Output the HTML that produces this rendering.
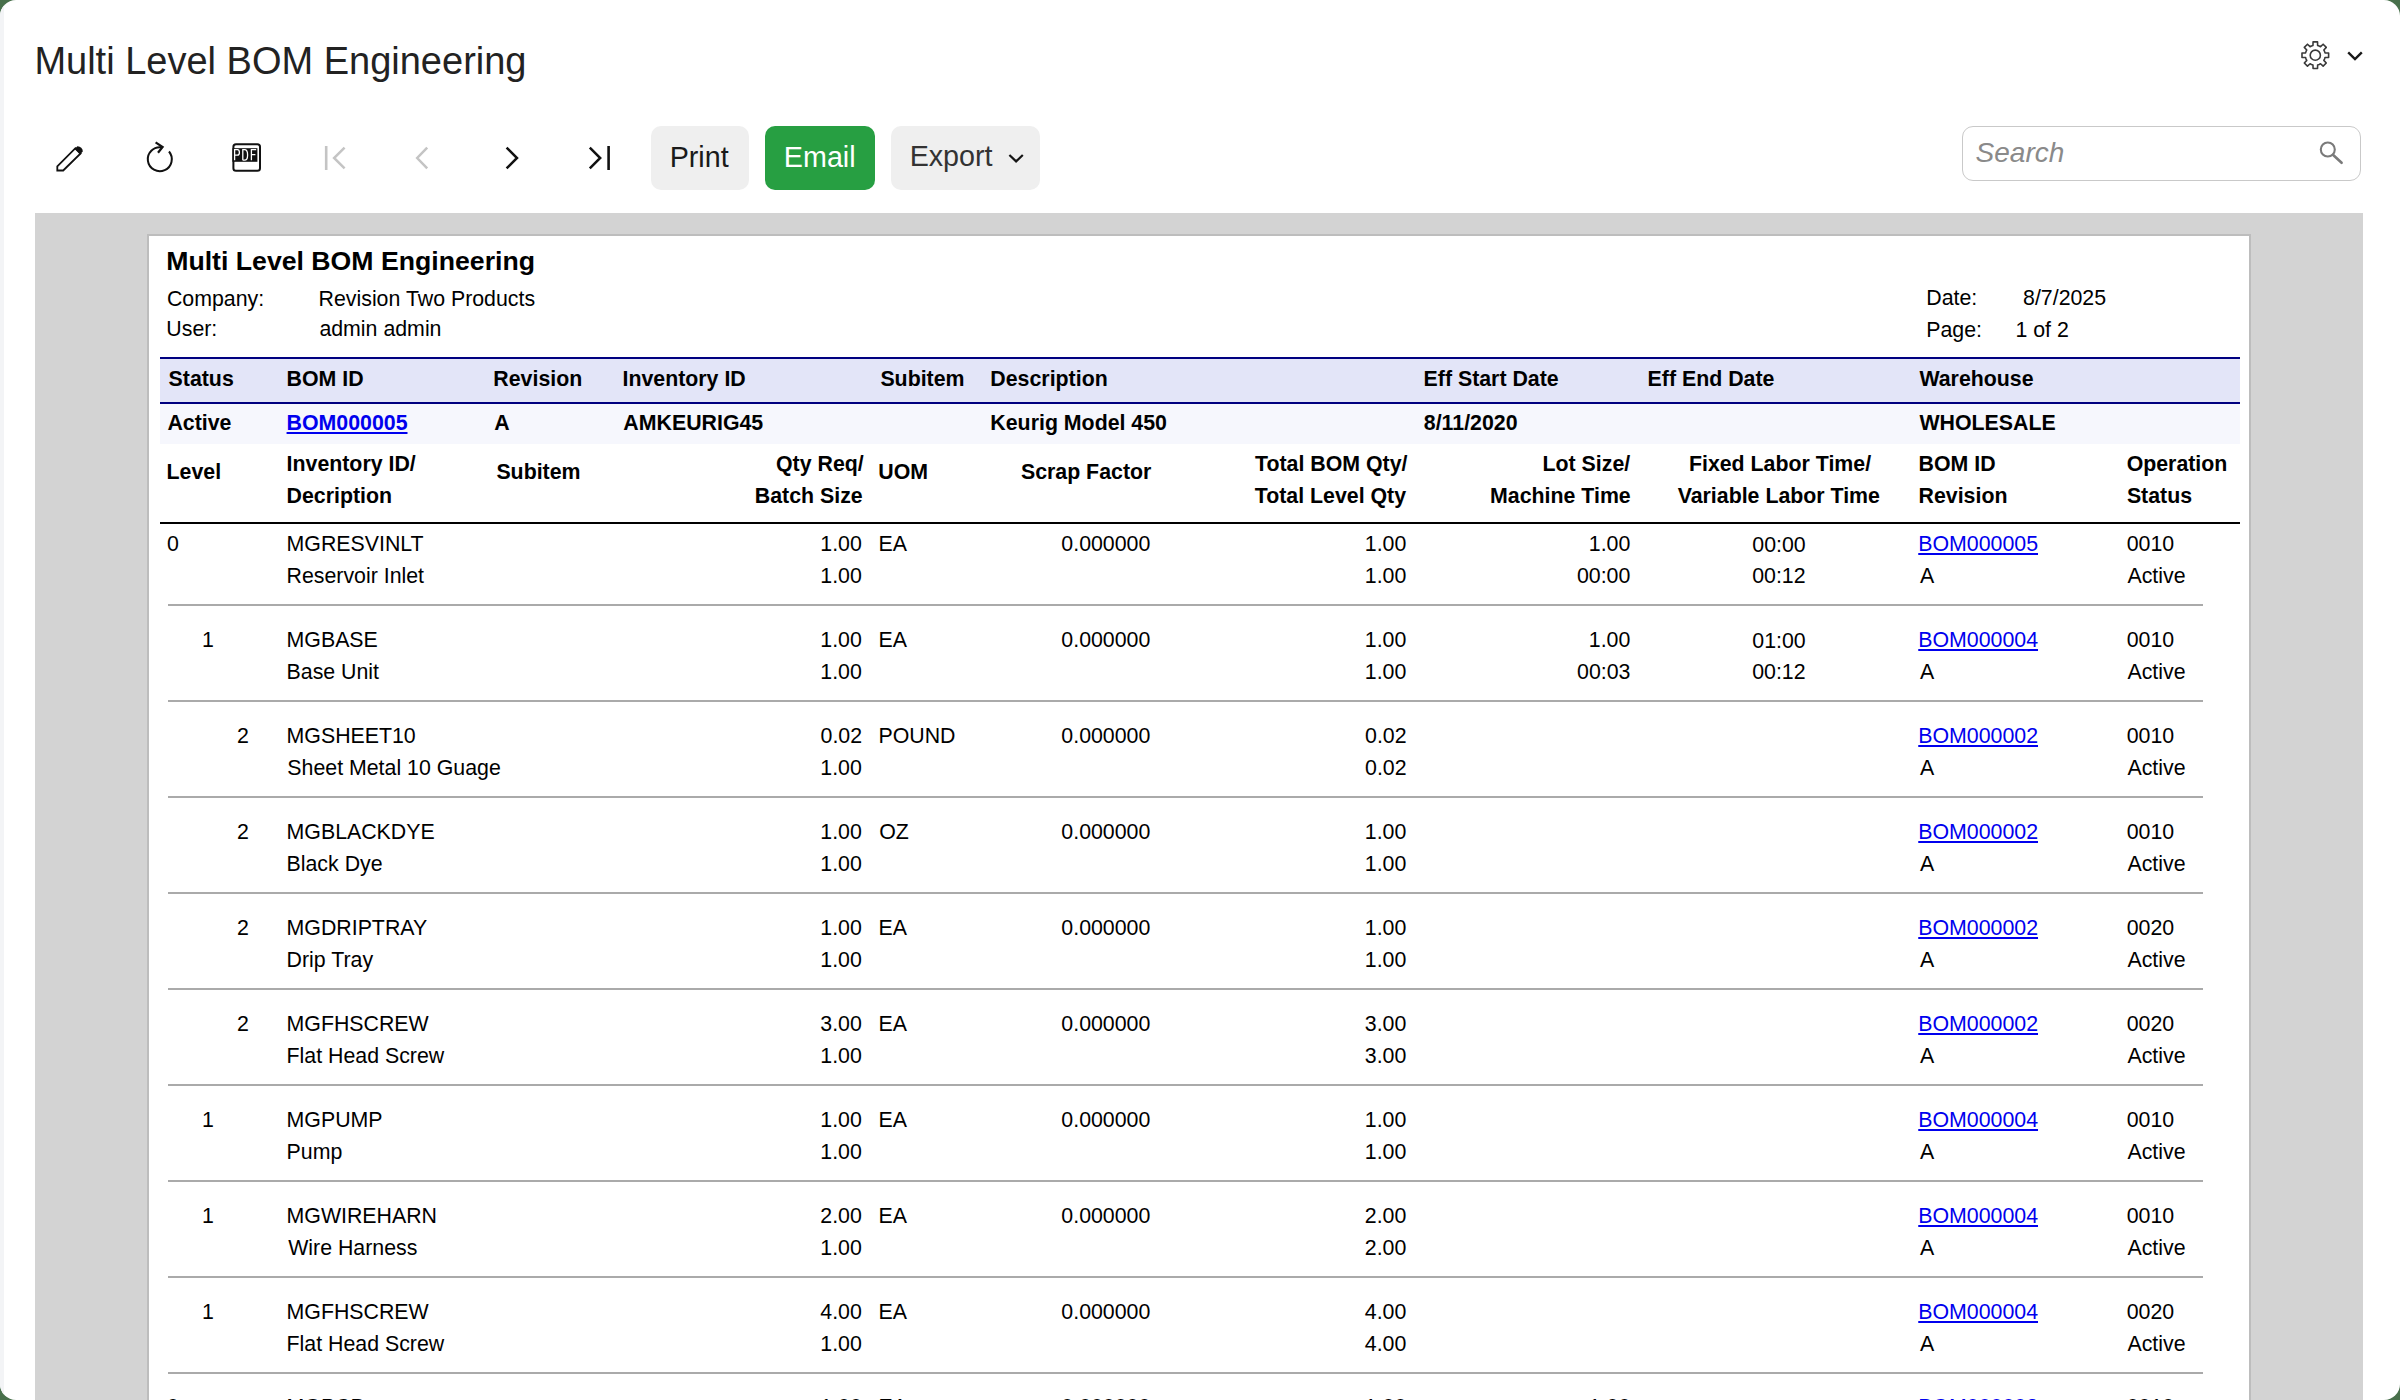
<!DOCTYPE html>
<html><head><meta charset="utf-8"><title>Multi Level BOM Engineering</title>
<style>
html,body{margin:0;padding:0;}
body{width:2400px;height:1400px;overflow:hidden;background:#48704b;position:relative;font-family:"Liberation Sans", sans-serif;}
#win{position:absolute;left:0;top:0;width:2400px;height:1400px;background:#fff;border-radius:16px;overflow:hidden;}
#strip{position:absolute;left:0;top:0;width:3.5px;height:1400px;background:#f3f4f6;}
.t{position:absolute;white-space:nowrap;font-family:"Liberation Sans", sans-serif;}
.r{position:absolute;}
</style></head>
<body><div id="win"><div id="strip"></div>
<div class="t" style="top:42.00px;font-size:38px;line-height:38px;color:#222;left:34.38px;">Multi Level BOM Engineering</div>
<div class="r" style="left:651px;top:125.5px;width:97.5px;height:64px;background:#efefef;border-radius:10px;"></div>
<div class="r" style="left:765px;top:125.5px;width:110px;height:64px;background:#279f42;border-radius:10px;"></div>
<div class="r" style="left:891px;top:125.5px;width:149px;height:64px;background:#efefef;border-radius:10px;"></div>
<div class="t" style="top:143.00px;font-size:28.7px;line-height:28.7px;color:#1a1a1a;left:669.65px;">Print</div>
<div class="t" style="top:143.00px;font-size:28.7px;line-height:28.7px;color:#fff;left:783.85px;">Email</div>
<div class="t" style="top:142.00px;font-size:28.7px;line-height:28.7px;color:#333;left:909.65px;">Export</div>
<div class="r" style="left:1962px;top:126px;width:399px;height:55px;background:#fff;border:1.5px solid #c9c9c9;border-radius:11px;box-sizing:border-box;"></div>
<div class="t" style="top:139.00px;font-size:28px;line-height:28px;font-style:italic;color:#8a8a8a;left:1975.61px;">Search</div>
<div class="r" style="left:35px;top:213px;width:2328px;height:1200px;background:#d3d3d3;"></div>
<div class="r" style="left:147px;top:234px;width:2104px;height:1200px;background:#fff;border:2px solid #bdbdbd;box-sizing:border-box;"></div>
<div class="t" style="top:247.80px;font-size:26.67px;line-height:26.67px;font-weight:bold;left:166.22px;">Multi Level BOM Engineering</div>
<div class="t" style="top:288.50px;font-size:21.33px;line-height:21.33px;left:166.92px;">Company:</div>
<div class="t" style="top:288.50px;font-size:21.33px;line-height:21.33px;left:318.55px;">Revision Two Products</div>
<div class="t" style="top:319.20px;font-size:21.33px;line-height:21.33px;left:166.35px;">User:</div>
<div class="t" style="top:319.20px;font-size:21.33px;line-height:21.33px;left:319.39px;">admin admin</div>
<div class="t" style="top:287.80px;font-size:21.33px;line-height:21.33px;left:1926.25px;">Date:</div>
<div class="t" style="top:287.80px;font-size:21.33px;line-height:21.33px;left:2023.07px;">8/7/2025</div>
<div class="t" style="top:319.50px;font-size:21.33px;line-height:21.33px;left:1926.25px;">Page:</div>
<div class="t" style="top:319.50px;font-size:21.33px;line-height:21.33px;left:2015.38px;">1 of 2</div>
<div class="r" style="left:160px;top:357.3px;width:2080px;height:46.7px;background:#e3e5f8;"></div>
<div class="r" style="left:160px;top:357.3px;width:2080px;height:2px;background:#000080;"></div>
<div class="r" style="left:160px;top:402px;width:2080px;height:2px;background:#000080;"></div>
<div class="r" style="left:160px;top:404px;width:2080px;height:39.5px;background:#f6f7fd;"></div>
<div class="t" style="top:368.80px;font-size:21.33px;line-height:21.33px;font-weight:bold;left:168.59px;">Status</div>
<div class="t" style="top:368.80px;font-size:21.33px;line-height:21.33px;font-weight:bold;left:286.57px;">BOM ID</div>
<div class="t" style="top:368.80px;font-size:21.33px;line-height:21.33px;font-weight:bold;left:493.37px;">Revision</div>
<div class="t" style="top:368.80px;font-size:21.33px;line-height:21.33px;font-weight:bold;left:622.47px;">Inventory ID</div>
<div class="t" style="top:368.80px;font-size:21.33px;line-height:21.33px;font-weight:bold;left:880.39px;">Subitem</div>
<div class="t" style="top:368.80px;font-size:21.33px;line-height:21.33px;font-weight:bold;left:990.37px;">Description</div>
<div class="t" style="top:368.80px;font-size:21.33px;line-height:21.33px;font-weight:bold;left:1423.57px;">Eff Start Date</div>
<div class="t" style="top:368.80px;font-size:21.33px;line-height:21.33px;font-weight:bold;left:1647.57px;">Eff End Date</div>
<div class="t" style="top:368.80px;font-size:21.33px;line-height:21.33px;font-weight:bold;left:1919.38px;">Warehouse</div>
<div class="t" style="top:413.40px;font-size:21.33px;line-height:21.33px;font-weight:bold;left:167.47px;">Active</div>
<div class="t" style="top:413.40px;font-size:21.33px;line-height:21.33px;font-weight:bold;color:#0000ee;left:286.57px;text-decoration:underline;">BOM000005</div>
<div class="t" style="top:413.40px;font-size:21.33px;line-height:21.33px;font-weight:bold;left:494.27px;">A</div>
<div class="t" style="top:413.40px;font-size:21.33px;line-height:21.33px;font-weight:bold;left:623.37px;">AMKEURIG45</div>
<div class="t" style="top:413.40px;font-size:21.33px;line-height:21.33px;font-weight:bold;left:990.37px;">Keurig Model 450</div>
<div class="t" style="top:413.40px;font-size:21.33px;line-height:21.33px;font-weight:bold;left:1423.82px;">8/11/2020</div>
<div class="t" style="top:413.40px;font-size:21.33px;line-height:21.33px;font-weight:bold;left:1919.38px;">WHOLESALE</div>
<div class="t" style="top:462.00px;font-size:21.33px;line-height:21.33px;font-weight:bold;left:166.57px;">Level</div>
<div class="t" style="top:454.00px;font-size:21.33px;line-height:21.33px;font-weight:bold;left:286.57px;">Inventory ID/</div>
<div class="t" style="top:485.80px;font-size:21.33px;line-height:21.33px;font-weight:bold;left:286.57px;">Decription</div>
<div class="t" style="top:462.00px;font-size:21.33px;line-height:21.33px;font-weight:bold;left:496.39px;">Subitem</div>
<div class="t" style="top:454.00px;font-size:21.33px;line-height:21.33px;font-weight:bold;left:736.00px;width:127.71px;text-align:right;">Qty Req/</div>
<div class="t" style="top:485.80px;font-size:21.33px;line-height:21.33px;font-weight:bold;left:714.86px;width:147.87px;text-align:right;">Batch Size</div>
<div class="t" style="top:462.00px;font-size:21.33px;line-height:21.33px;font-weight:bold;left:878.32px;">UOM</div>
<div class="t" style="top:462.00px;font-size:21.33px;line-height:21.33px;font-weight:bold;left:980.93px;width:170.40px;text-align:right;">Scrap Factor</div>
<div class="t" style="top:454.00px;font-size:21.33px;line-height:21.33px;font-weight:bold;left:1213.46px;width:194.05px;text-align:right;">Total BOM Qty/</div>
<div class="t" style="top:485.80px;font-size:21.33px;line-height:21.33px;font-weight:bold;left:1213.21px;width:192.90px;text-align:right;">Total Level Qty</div>
<div class="t" style="top:454.00px;font-size:21.33px;line-height:21.33px;font-weight:bold;left:1502.51px;width:127.69px;text-align:right;">Lot Size/</div>
<div class="t" style="top:485.80px;font-size:21.33px;line-height:21.33px;font-weight:bold;left:1449.68px;width:181.05px;text-align:right;">Machine Time</div>
<div class="t" style="top:454.00px;font-size:21.33px;line-height:21.33px;font-weight:bold;left:1668.75px;width:222.52px;text-align:center;">Fixed Labor Time/</div>
<div class="t" style="top:485.80px;font-size:21.33px;line-height:21.33px;font-weight:bold;left:1656.87px;width:243.88px;text-align:center;">Variable Labor Time</div>
<div class="t" style="top:454.00px;font-size:21.33px;line-height:21.33px;font-weight:bold;left:1918.57px;">BOM ID</div>
<div class="t" style="top:485.80px;font-size:21.33px;line-height:21.33px;font-weight:bold;left:1918.57px;">Revision</div>
<div class="t" style="top:454.00px;font-size:21.33px;line-height:21.33px;font-weight:bold;left:2126.63px;">Operation</div>
<div class="t" style="top:485.80px;font-size:21.33px;line-height:21.33px;font-weight:bold;left:2126.89px;">Status</div>
<div class="r" style="left:160px;top:522px;width:2080px;height:2px;background:#000;"></div>
<div class="t" style="top:533.70px;font-size:21.33px;line-height:21.33px;left:167.10px;">0</div>
<div class="t" style="top:533.70px;font-size:21.33px;line-height:21.33px;left:286.55px;">MGRESVINLT</div>
<div class="t" style="top:565.90px;font-size:21.33px;line-height:21.33px;left:286.55px;">Reservoir Inlet</div>
<div class="t" style="top:533.70px;font-size:21.33px;line-height:21.33px;left:780.32px;width:81.51px;text-align:right;">1.00</div>
<div class="t" style="top:565.90px;font-size:21.33px;line-height:21.33px;left:780.32px;width:81.51px;text-align:right;">1.00</div>
<div class="t" style="top:533.70px;font-size:21.33px;line-height:21.33px;left:878.45px;">EA</div>
<div class="t" style="top:533.70px;font-size:21.33px;line-height:21.33px;left:1021.37px;width:128.97px;text-align:right;">0.000000</div>
<div class="t" style="top:533.70px;font-size:21.33px;line-height:21.33px;left:1324.82px;width:81.51px;text-align:right;">1.00</div>
<div class="t" style="top:565.90px;font-size:21.33px;line-height:21.33px;left:1324.82px;width:81.51px;text-align:right;">1.00</div>
<div class="t" style="top:533.70px;font-size:21.33px;line-height:21.33px;left:1548.82px;width:81.51px;text-align:right;">1.00</div>
<div class="t" style="top:565.90px;font-size:21.33px;line-height:21.33px;left:1536.96px;width:93.38px;text-align:right;">00:00</div>
<div class="t" style="top:535.20px;font-size:21.33px;line-height:21.33px;left:1732.31px;width:93.38px;text-align:center;">00:00</div>
<div class="t" style="top:565.90px;font-size:21.33px;line-height:21.33px;left:1732.19px;width:93.38px;text-align:center;">00:12</div>
<div class="t" style="top:533.70px;font-size:21.33px;line-height:21.33px;color:#0000ee;left:1918.25px;text-decoration:underline;">BOM000005</div>
<div class="t" style="top:565.90px;font-size:21.33px;line-height:21.33px;left:1919.96px;">A</div>
<div class="t" style="top:533.70px;font-size:21.33px;line-height:21.33px;left:2126.67px;">0010</div>
<div class="t" style="top:565.90px;font-size:21.33px;line-height:21.33px;left:2127.46px;">Active</div>
<div class="r" style="left:168px;top:604px;width:2035px;height:2px;background:#aaaaaa;"></div>
<div class="t" style="top:629.70px;font-size:21.33px;line-height:21.33px;left:202.10px;">1</div>
<div class="t" style="top:629.70px;font-size:21.33px;line-height:21.33px;left:286.55px;">MGBASE</div>
<div class="t" style="top:661.90px;font-size:21.33px;line-height:21.33px;left:286.55px;">Base Unit</div>
<div class="t" style="top:629.70px;font-size:21.33px;line-height:21.33px;left:780.32px;width:81.51px;text-align:right;">1.00</div>
<div class="t" style="top:661.90px;font-size:21.33px;line-height:21.33px;left:780.32px;width:81.51px;text-align:right;">1.00</div>
<div class="t" style="top:629.70px;font-size:21.33px;line-height:21.33px;left:878.45px;">EA</div>
<div class="t" style="top:629.70px;font-size:21.33px;line-height:21.33px;left:1021.37px;width:128.97px;text-align:right;">0.000000</div>
<div class="t" style="top:629.70px;font-size:21.33px;line-height:21.33px;left:1324.82px;width:81.51px;text-align:right;">1.00</div>
<div class="t" style="top:661.90px;font-size:21.33px;line-height:21.33px;left:1324.82px;width:81.51px;text-align:right;">1.00</div>
<div class="t" style="top:629.70px;font-size:21.33px;line-height:21.33px;left:1548.82px;width:81.51px;text-align:right;">1.00</div>
<div class="t" style="top:661.90px;font-size:21.33px;line-height:21.33px;left:1537.06px;width:93.38px;text-align:right;">00:03</div>
<div class="t" style="top:631.20px;font-size:21.33px;line-height:21.33px;left:1732.31px;width:93.38px;text-align:center;">01:00</div>
<div class="t" style="top:661.90px;font-size:21.33px;line-height:21.33px;left:1732.19px;width:93.38px;text-align:center;">00:12</div>
<div class="t" style="top:629.70px;font-size:21.33px;line-height:21.33px;color:#0000ee;left:1918.25px;text-decoration:underline;">BOM000004</div>
<div class="t" style="top:661.90px;font-size:21.33px;line-height:21.33px;left:1919.96px;">A</div>
<div class="t" style="top:629.70px;font-size:21.33px;line-height:21.33px;left:2126.67px;">0010</div>
<div class="t" style="top:661.90px;font-size:21.33px;line-height:21.33px;left:2127.46px;">Active</div>
<div class="r" style="left:168px;top:700px;width:2035px;height:2px;background:#aaaaaa;"></div>
<div class="t" style="top:725.70px;font-size:21.33px;line-height:21.33px;left:237.10px;">2</div>
<div class="t" style="top:725.70px;font-size:21.33px;line-height:21.33px;left:286.55px;">MGSHEET10</div>
<div class="t" style="top:757.90px;font-size:21.33px;line-height:21.33px;left:287.33px;">Sheet Metal 10 Guage</div>
<div class="t" style="top:725.70px;font-size:21.33px;line-height:21.33px;left:780.56px;width:81.51px;text-align:right;">0.02</div>
<div class="t" style="top:757.90px;font-size:21.33px;line-height:21.33px;left:780.32px;width:81.51px;text-align:right;">1.00</div>
<div class="t" style="top:725.70px;font-size:21.33px;line-height:21.33px;left:878.45px;">POUND</div>
<div class="t" style="top:725.70px;font-size:21.33px;line-height:21.33px;left:1021.37px;width:128.97px;text-align:right;">0.000000</div>
<div class="t" style="top:725.70px;font-size:21.33px;line-height:21.33px;left:1325.06px;width:81.51px;text-align:right;">0.02</div>
<div class="t" style="top:757.90px;font-size:21.33px;line-height:21.33px;left:1325.06px;width:81.51px;text-align:right;">0.02</div>
<div class="t" style="top:725.70px;font-size:21.33px;line-height:21.33px;color:#0000ee;left:1918.25px;text-decoration:underline;">BOM000002</div>
<div class="t" style="top:757.90px;font-size:21.33px;line-height:21.33px;left:1919.96px;">A</div>
<div class="t" style="top:725.70px;font-size:21.33px;line-height:21.33px;left:2126.67px;">0010</div>
<div class="t" style="top:757.90px;font-size:21.33px;line-height:21.33px;left:2127.46px;">Active</div>
<div class="r" style="left:168px;top:796px;width:2035px;height:2px;background:#aaaaaa;"></div>
<div class="t" style="top:821.70px;font-size:21.33px;line-height:21.33px;left:237.10px;">2</div>
<div class="t" style="top:821.70px;font-size:21.33px;line-height:21.33px;left:286.55px;">MGBLACKDYE</div>
<div class="t" style="top:853.90px;font-size:21.33px;line-height:21.33px;left:286.55px;">Black Dye</div>
<div class="t" style="top:821.70px;font-size:21.33px;line-height:21.33px;left:780.32px;width:81.51px;text-align:right;">1.00</div>
<div class="t" style="top:853.90px;font-size:21.33px;line-height:21.33px;left:780.32px;width:81.51px;text-align:right;">1.00</div>
<div class="t" style="top:821.70px;font-size:21.33px;line-height:21.33px;left:879.19px;">OZ</div>
<div class="t" style="top:821.70px;font-size:21.33px;line-height:21.33px;left:1021.37px;width:128.97px;text-align:right;">0.000000</div>
<div class="t" style="top:821.70px;font-size:21.33px;line-height:21.33px;left:1324.82px;width:81.51px;text-align:right;">1.00</div>
<div class="t" style="top:853.90px;font-size:21.33px;line-height:21.33px;left:1324.82px;width:81.51px;text-align:right;">1.00</div>
<div class="t" style="top:821.70px;font-size:21.33px;line-height:21.33px;color:#0000ee;left:1918.25px;text-decoration:underline;">BOM000002</div>
<div class="t" style="top:853.90px;font-size:21.33px;line-height:21.33px;left:1919.96px;">A</div>
<div class="t" style="top:821.70px;font-size:21.33px;line-height:21.33px;left:2126.67px;">0010</div>
<div class="t" style="top:853.90px;font-size:21.33px;line-height:21.33px;left:2127.46px;">Active</div>
<div class="r" style="left:168px;top:892px;width:2035px;height:2px;background:#aaaaaa;"></div>
<div class="t" style="top:917.70px;font-size:21.33px;line-height:21.33px;left:237.10px;">2</div>
<div class="t" style="top:917.70px;font-size:21.33px;line-height:21.33px;left:286.55px;">MGDRIPTRAY</div>
<div class="t" style="top:949.90px;font-size:21.33px;line-height:21.33px;left:286.55px;">Drip Tray</div>
<div class="t" style="top:917.70px;font-size:21.33px;line-height:21.33px;left:780.32px;width:81.51px;text-align:right;">1.00</div>
<div class="t" style="top:949.90px;font-size:21.33px;line-height:21.33px;left:780.32px;width:81.51px;text-align:right;">1.00</div>
<div class="t" style="top:917.70px;font-size:21.33px;line-height:21.33px;left:878.45px;">EA</div>
<div class="t" style="top:917.70px;font-size:21.33px;line-height:21.33px;left:1021.37px;width:128.97px;text-align:right;">0.000000</div>
<div class="t" style="top:917.70px;font-size:21.33px;line-height:21.33px;left:1324.82px;width:81.51px;text-align:right;">1.00</div>
<div class="t" style="top:949.90px;font-size:21.33px;line-height:21.33px;left:1324.82px;width:81.51px;text-align:right;">1.00</div>
<div class="t" style="top:917.70px;font-size:21.33px;line-height:21.33px;color:#0000ee;left:1918.25px;text-decoration:underline;">BOM000002</div>
<div class="t" style="top:949.90px;font-size:21.33px;line-height:21.33px;left:1919.96px;">A</div>
<div class="t" style="top:917.70px;font-size:21.33px;line-height:21.33px;left:2126.67px;">0020</div>
<div class="t" style="top:949.90px;font-size:21.33px;line-height:21.33px;left:2127.46px;">Active</div>
<div class="r" style="left:168px;top:988px;width:2035px;height:2px;background:#aaaaaa;"></div>
<div class="t" style="top:1013.70px;font-size:21.33px;line-height:21.33px;left:237.10px;">2</div>
<div class="t" style="top:1013.70px;font-size:21.33px;line-height:21.33px;left:286.55px;">MGFHSCREW</div>
<div class="t" style="top:1045.90px;font-size:21.33px;line-height:21.33px;left:286.55px;">Flat Head Screw</div>
<div class="t" style="top:1013.70px;font-size:21.33px;line-height:21.33px;left:780.32px;width:81.51px;text-align:right;">3.00</div>
<div class="t" style="top:1045.90px;font-size:21.33px;line-height:21.33px;left:780.32px;width:81.51px;text-align:right;">1.00</div>
<div class="t" style="top:1013.70px;font-size:21.33px;line-height:21.33px;left:878.45px;">EA</div>
<div class="t" style="top:1013.70px;font-size:21.33px;line-height:21.33px;left:1021.37px;width:128.97px;text-align:right;">0.000000</div>
<div class="t" style="top:1013.70px;font-size:21.33px;line-height:21.33px;left:1324.82px;width:81.51px;text-align:right;">3.00</div>
<div class="t" style="top:1045.90px;font-size:21.33px;line-height:21.33px;left:1324.82px;width:81.51px;text-align:right;">3.00</div>
<div class="t" style="top:1013.70px;font-size:21.33px;line-height:21.33px;color:#0000ee;left:1918.25px;text-decoration:underline;">BOM000002</div>
<div class="t" style="top:1045.90px;font-size:21.33px;line-height:21.33px;left:1919.96px;">A</div>
<div class="t" style="top:1013.70px;font-size:21.33px;line-height:21.33px;left:2126.67px;">0020</div>
<div class="t" style="top:1045.90px;font-size:21.33px;line-height:21.33px;left:2127.46px;">Active</div>
<div class="r" style="left:168px;top:1084px;width:2035px;height:2px;background:#aaaaaa;"></div>
<div class="t" style="top:1109.70px;font-size:21.33px;line-height:21.33px;left:202.10px;">1</div>
<div class="t" style="top:1109.70px;font-size:21.33px;line-height:21.33px;left:286.55px;">MGPUMP</div>
<div class="t" style="top:1141.90px;font-size:21.33px;line-height:21.33px;left:286.55px;">Pump</div>
<div class="t" style="top:1109.70px;font-size:21.33px;line-height:21.33px;left:780.32px;width:81.51px;text-align:right;">1.00</div>
<div class="t" style="top:1141.90px;font-size:21.33px;line-height:21.33px;left:780.32px;width:81.51px;text-align:right;">1.00</div>
<div class="t" style="top:1109.70px;font-size:21.33px;line-height:21.33px;left:878.45px;">EA</div>
<div class="t" style="top:1109.70px;font-size:21.33px;line-height:21.33px;left:1021.37px;width:128.97px;text-align:right;">0.000000</div>
<div class="t" style="top:1109.70px;font-size:21.33px;line-height:21.33px;left:1324.82px;width:81.51px;text-align:right;">1.00</div>
<div class="t" style="top:1141.90px;font-size:21.33px;line-height:21.33px;left:1324.82px;width:81.51px;text-align:right;">1.00</div>
<div class="t" style="top:1109.70px;font-size:21.33px;line-height:21.33px;color:#0000ee;left:1918.25px;text-decoration:underline;">BOM000004</div>
<div class="t" style="top:1141.90px;font-size:21.33px;line-height:21.33px;left:1919.96px;">A</div>
<div class="t" style="top:1109.70px;font-size:21.33px;line-height:21.33px;left:2126.67px;">0010</div>
<div class="t" style="top:1141.90px;font-size:21.33px;line-height:21.33px;left:2127.46px;">Active</div>
<div class="r" style="left:168px;top:1180px;width:2035px;height:2px;background:#aaaaaa;"></div>
<div class="t" style="top:1205.70px;font-size:21.33px;line-height:21.33px;left:202.10px;">1</div>
<div class="t" style="top:1205.70px;font-size:21.33px;line-height:21.33px;left:286.55px;">MGWIREHARN</div>
<div class="t" style="top:1237.90px;font-size:21.33px;line-height:21.33px;left:288.21px;">Wire Harness</div>
<div class="t" style="top:1205.70px;font-size:21.33px;line-height:21.33px;left:780.32px;width:81.51px;text-align:right;">2.00</div>
<div class="t" style="top:1237.90px;font-size:21.33px;line-height:21.33px;left:780.32px;width:81.51px;text-align:right;">1.00</div>
<div class="t" style="top:1205.70px;font-size:21.33px;line-height:21.33px;left:878.45px;">EA</div>
<div class="t" style="top:1205.70px;font-size:21.33px;line-height:21.33px;left:1021.37px;width:128.97px;text-align:right;">0.000000</div>
<div class="t" style="top:1205.70px;font-size:21.33px;line-height:21.33px;left:1324.82px;width:81.51px;text-align:right;">2.00</div>
<div class="t" style="top:1237.90px;font-size:21.33px;line-height:21.33px;left:1324.82px;width:81.51px;text-align:right;">2.00</div>
<div class="t" style="top:1205.70px;font-size:21.33px;line-height:21.33px;color:#0000ee;left:1918.25px;text-decoration:underline;">BOM000004</div>
<div class="t" style="top:1237.90px;font-size:21.33px;line-height:21.33px;left:1919.96px;">A</div>
<div class="t" style="top:1205.70px;font-size:21.33px;line-height:21.33px;left:2126.67px;">0010</div>
<div class="t" style="top:1237.90px;font-size:21.33px;line-height:21.33px;left:2127.46px;">Active</div>
<div class="r" style="left:168px;top:1276px;width:2035px;height:2px;background:#aaaaaa;"></div>
<div class="t" style="top:1301.70px;font-size:21.33px;line-height:21.33px;left:202.10px;">1</div>
<div class="t" style="top:1301.70px;font-size:21.33px;line-height:21.33px;left:286.55px;">MGFHSCREW</div>
<div class="t" style="top:1333.90px;font-size:21.33px;line-height:21.33px;left:286.55px;">Flat Head Screw</div>
<div class="t" style="top:1301.70px;font-size:21.33px;line-height:21.33px;left:780.32px;width:81.51px;text-align:right;">4.00</div>
<div class="t" style="top:1333.90px;font-size:21.33px;line-height:21.33px;left:780.32px;width:81.51px;text-align:right;">1.00</div>
<div class="t" style="top:1301.70px;font-size:21.33px;line-height:21.33px;left:878.45px;">EA</div>
<div class="t" style="top:1301.70px;font-size:21.33px;line-height:21.33px;left:1021.37px;width:128.97px;text-align:right;">0.000000</div>
<div class="t" style="top:1301.70px;font-size:21.33px;line-height:21.33px;left:1324.82px;width:81.51px;text-align:right;">4.00</div>
<div class="t" style="top:1333.90px;font-size:21.33px;line-height:21.33px;left:1324.82px;width:81.51px;text-align:right;">4.00</div>
<div class="t" style="top:1301.70px;font-size:21.33px;line-height:21.33px;color:#0000ee;left:1918.25px;text-decoration:underline;">BOM000004</div>
<div class="t" style="top:1333.90px;font-size:21.33px;line-height:21.33px;left:1919.96px;">A</div>
<div class="t" style="top:1301.70px;font-size:21.33px;line-height:21.33px;left:2126.67px;">0020</div>
<div class="t" style="top:1333.90px;font-size:21.33px;line-height:21.33px;left:2127.46px;">Active</div>
<div class="r" style="left:168px;top:1372px;width:2035px;height:2px;background:#aaaaaa;"></div>
<div class="t" style="top:1396.50px;font-size:21.33px;line-height:21.33px;left:167.10px;">0</div>
<div class="t" style="top:1396.50px;font-size:21.33px;line-height:21.33px;left:286.55px;">MGPCB</div>
<div class="t" style="top:1429.90px;font-size:21.33px;line-height:21.33px;left:286.55px;">Printed Circuit Board</div>
<div class="t" style="top:1396.50px;font-size:21.33px;line-height:21.33px;left:780.32px;width:81.51px;text-align:right;">1.00</div>
<div class="t" style="top:1429.90px;font-size:21.33px;line-height:21.33px;left:780.32px;width:81.51px;text-align:right;">1.00</div>
<div class="t" style="top:1396.50px;font-size:21.33px;line-height:21.33px;left:878.45px;">EA</div>
<div class="t" style="top:1396.50px;font-size:21.33px;line-height:21.33px;left:1021.37px;width:128.97px;text-align:right;">0.000000</div>
<div class="t" style="top:1396.50px;font-size:21.33px;line-height:21.33px;left:1324.82px;width:81.51px;text-align:right;">1.00</div>
<div class="t" style="top:1429.90px;font-size:21.33px;line-height:21.33px;left:1324.82px;width:81.51px;text-align:right;">1.00</div>
<div class="t" style="top:1396.50px;font-size:21.33px;line-height:21.33px;left:1548.82px;width:81.51px;text-align:right;">1.00</div>
<div class="t" style="top:1429.90px;font-size:21.33px;line-height:21.33px;left:1536.96px;width:93.38px;text-align:right;">00:00</div>
<div class="t" style="top:1398.00px;font-size:21.33px;line-height:21.33px;left:1732.31px;width:93.38px;text-align:center;">00:00</div>
<div class="t" style="top:1429.90px;font-size:21.33px;line-height:21.33px;left:1732.19px;width:93.38px;text-align:center;">00:12</div>
<div class="t" style="top:1396.50px;font-size:21.33px;line-height:21.33px;color:#0000ee;left:1918.25px;text-decoration:underline;">BOM000003</div>
<div class="t" style="top:1429.90px;font-size:21.33px;line-height:21.33px;left:1919.96px;">A</div>
<div class="t" style="top:1396.50px;font-size:21.33px;line-height:21.33px;left:2126.67px;">0010</div>
<div class="t" style="top:1429.90px;font-size:21.33px;line-height:21.33px;left:2127.46px;">Active</div>
<div class="r" style="left:168px;top:1468px;width:2035px;height:2px;background:#aaaaaa;"></div>

<svg class="ic" width="2400" height="240" viewBox="0 0 2400 240" style="position:absolute;left:0;top:0">
 <!-- pencil -->
 <path d="M57.3,170.5 L57.3,166.3 L75.4,148.2 L80.6,153.4 L63.2,170.5 Z" fill="none" stroke="#111" stroke-width="1.8" stroke-linejoin="miter"/>
 <path d="M74.6,149 L77.4,146.2 A5.2,5.2 0 0 1 82.8,151.6 L80,154.4 Z" fill="#111"/>
 <!-- refresh -->
 <path d="M168.99,151.49 A12,12 0 1 1 161.47,147.32" fill="none" stroke="#111" stroke-width="2"/>
 <path d="M155.6,142.4 L162.6,147 L158,152.8" fill="none" stroke="#111" stroke-width="2.2" stroke-linejoin="miter"/>
 <!-- pdf -->
 <rect x="233.4" y="144.2" width="26.6" height="26.6" rx="2.6" fill="none" stroke="#111" stroke-width="2"/>
 <rect x="232.4" y="148.2" width="25" height="13.6" fill="#111"/>
 <path d="M234.6,160.2 V149.6 H237.4 Q239.4,149.6 239.4,152.4 Q239.4,155.2 237.4,155.2 H234.6 M242.8,160.2 V149.6 H244.6 Q247.6,149.6 247.6,154.9 Q247.6,160.2 244.6,160.2 H242.8 M251.4,160.2 V149.6 H256.2 M251.4,154.6 H255.4" fill="none" stroke="#fff" stroke-width="1.3"/>
 <!-- first -->
 <line x1="326.2" y1="146" x2="326.2" y2="170" stroke="#c4c4c4" stroke-width="2.6"/>
 <path d="M344.6,147.6 L334.1,158 L344.6,168.4" fill="none" stroke="#c4c4c4" stroke-width="2.5"/>
 <!-- prev -->
 <path d="M427.2,147.6 L417.2,158 L427.2,168.4" fill="none" stroke="#c4c4c4" stroke-width="2.5"/>
 <!-- next -->
 <path d="M506.6,147.6 L517,158 L506.6,168.4" fill="none" stroke="#111" stroke-width="2.5"/>
 <!-- last -->
 <path d="M589.8,147.6 L600.2,158 L589.8,168.4" fill="none" stroke="#111" stroke-width="2.5"/>
 <line x1="608.6" y1="146" x2="608.6" y2="170" stroke="#111" stroke-width="2.6"/>
 <!-- export chevron -->
 <path d="M1009.4,155 L1016.1,161.4 L1022.8,155" fill="none" stroke="#151515" stroke-width="2.2"/>
 <!-- search icon -->
 <circle cx="2327.8" cy="149.5" r="7" fill="none" stroke="#7a7a7a" stroke-width="2.1"/>
 <line x1="2333.2" y1="155" x2="2341.6" y2="162.8" stroke="#7a7a7a" stroke-width="2.6" stroke-linecap="round"/>
 <!-- gear -->
 <path d="M2311.47,45.96 L2312.97,45.48 L2313.07,41.89 L2317.53,41.89 L2317.63,45.48 L2319.13,45.96 L2320.52,46.67 L2323.14,44.21 L2326.29,47.36 L2323.83,49.98 L2324.54,51.37 L2325.02,52.87 L2328.61,52.97 L2328.61,57.43 L2325.02,57.53 L2324.54,59.03 L2323.83,60.42 L2326.29,63.04 L2323.14,66.19 L2320.52,63.73 L2319.13,64.44 L2317.63,64.92 L2317.53,68.51 L2313.07,68.51 L2312.97,64.92 L2311.47,64.44 L2310.08,63.73 L2307.46,66.19 L2304.31,63.04 L2306.77,60.42 L2306.06,59.03 L2305.58,57.53 L2301.99,57.43 L2301.99,52.97 L2305.58,52.87 L2306.06,51.37 L2306.77,49.98 L2304.31,47.36 L2307.46,44.21 L2310.08,46.67 Z" fill="none" stroke="#3a3a3a" stroke-width="1.6" stroke-linejoin="round"/><circle cx="2315.3" cy="55.2" r="5.1" fill="none" stroke="#3a3a3a" stroke-width="1.6"/>
 <!-- top chevron -->
 <path d="M2348.2,52.4 L2355,59 L2361.8,52.4" fill="none" stroke="#1a1a1a" stroke-width="2.4"/>
</svg>

</div></body></html>
